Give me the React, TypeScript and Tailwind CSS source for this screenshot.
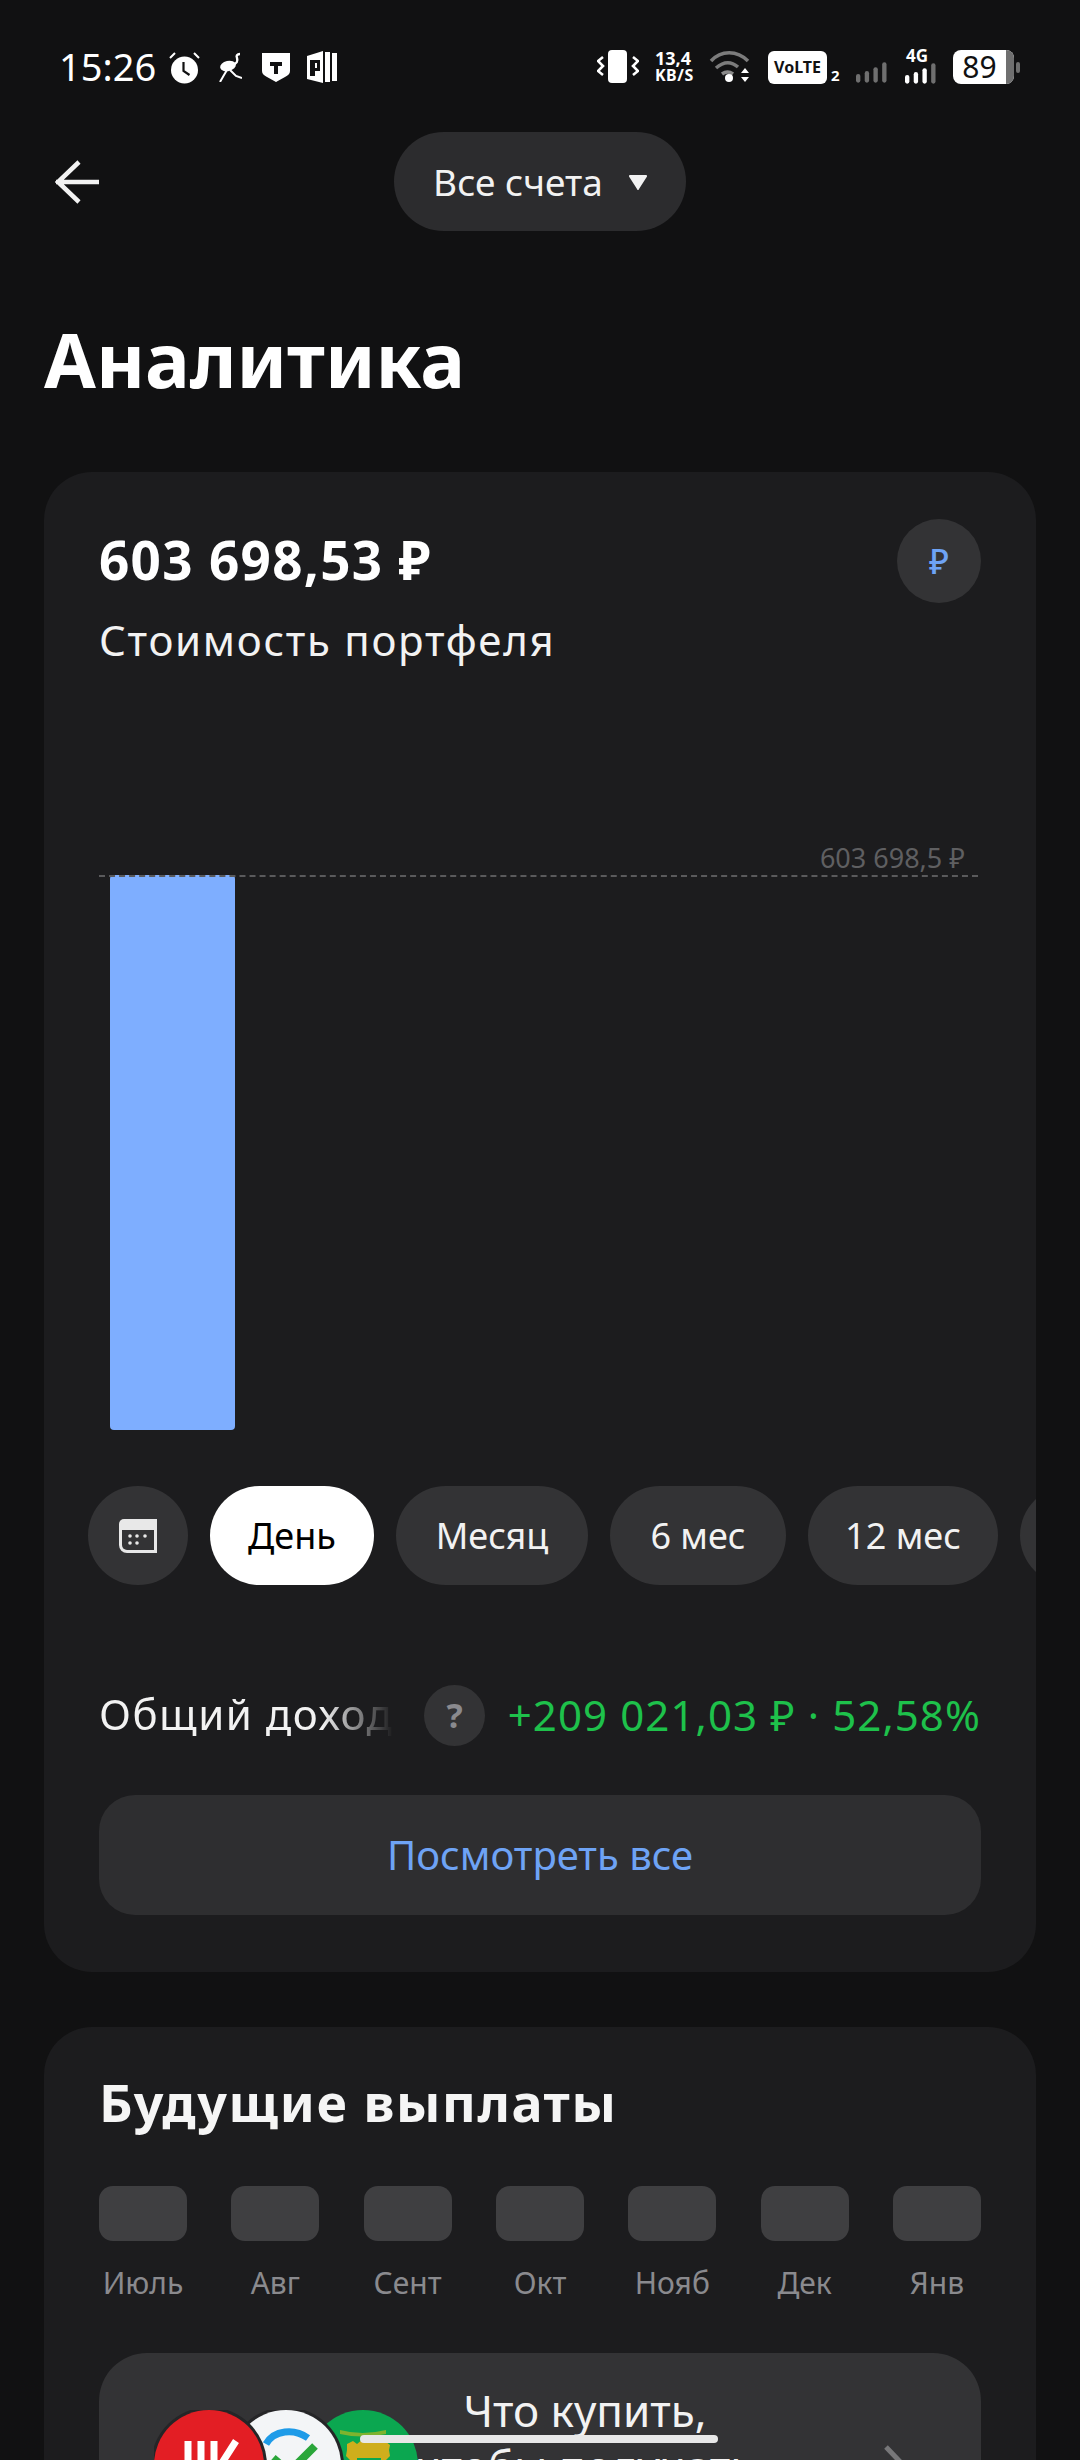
import React from 'react';

const months = ['Июль', 'Авг', 'Сент', 'Окт', 'Нояб', 'Дек', 'Янв'];

// Status bar icons
const AlarmIcon = () => (
  <svg width="31" height="33" viewBox="0 0 31 33" className="ml-[15px]">
    <circle cx="15.5" cy="19" r="13.5" fill="#fff" />
    <path d="M14.5 11v9l6 4" fill="none" stroke="#111112" strokeWidth="2.2" />
    <path d="M1 7l5-5M30 7l-5-5" stroke="#fff" strokeWidth="2" />
  </svg>
);

const OstrichIcon = () => (
  <svg width="23" height="30" viewBox="0 0 23 30" className="ml-[19px]" fill="none" stroke="#fff">
    <ellipse cx="9" cy="14" rx="8" ry="5" fill="#fff" stroke="none" transform="rotate(-12 9 14)" />
    <path d="M13 13c5-1 6-4 5-7-1-2 0-4 3-4" strokeWidth="2.4" />
    <path d="M8 18l-3 5-4 7" strokeWidth="2" />
    <path d="M11 18l6 6 6 2" strokeWidth="2" />
  </svg>
);

const ShieldIcon = () => (
  <svg width="28" height="30" viewBox="0 0 28 30" className="ml-[20px]">
    <path d="M0 1h28v18c0 3-2 4-5 6l-9 5-9-5c-3-2-5-3-5-6z" fill="#fff" />
    <path d="M8 10h12v4h-4v8h-4v-8H8z" fill="#111112" />
  </svg>
);

const ParkingIcon = () => (
  <svg width="31" height="32" viewBox="0 0 31 32" className="ml-[17px]">
    <path d="M0 5L16 0v32L0 28z" fill="#fff" />
    <rect x="18" y="1" width="5" height="30" fill="#fff" />
    <rect x="25" y="2" width="5" height="28" fill="#fff" />
    <path d="M3 9h10v11H8v5H3z M8 12v5h2v-5z" fill="#111112" fillRule="evenodd" />
  </svg>
);

const VibrateIcon = () => (
  <svg width="42" height="34" viewBox="0 0 42 34">
    <rect x="11" y="0" width="19" height="33" rx="4" fill="#fff" />
    <path d="M6 7L1 11l5 5-5 5 5 4M36 7l5 4-5 5 5 5-5 4" fill="none" stroke="#fff" strokeWidth="2.6" />
  </svg>
);

const WifiIcon = () => (
  <svg width="42" height="34" viewBox="0 0 42 34" className="ml-[14px]">
    <path d="M2 11C12 0 28 0 39 11" fill="none" stroke="#7c7c7c" strokeWidth="3.5" />
    <path d="M7 18c8-7 15-7 22-1" fill="none" stroke="#7c7c7c" strokeWidth="3.5" />
    <path d="M13 24c4-3 7-3 11 0" fill="none" stroke="#8a8a8a" strokeWidth="3.5" />
    <circle cx="20" cy="28" r="4" fill="#fff" />
    <path d="M36 18l-4 5h8zM36 32l-4-5h8z" fill="#fff" />
  </svg>
);

const SignalIcon = ({ levels }: { levels: string[] }) => (
  <svg width="31" height="22" viewBox="0 0 32 22">
    <rect x="0" y="12" width="4.5" height="9" rx="2.2" fill={levels[0]} />
    <rect x="9" y="9" width="4.5" height="12" rx="2.2" fill={levels[1]} />
    <rect x="18" y="5" width="4.5" height="16" rx="2.2" fill={levels[2]} />
    <rect x="27" y="0" width="4.5" height="21" rx="2.2" fill={levels[3]} />
  </svg>
);

const StatusBar = () => (
  <div className="flex h-[132px] items-start justify-between pl-[59px] pr-[60px] pt-[50px]">
    <div className="flex h-[34px] items-center">
      <span className="-mt-[2px] w-[95px] text-[38px] leading-none text-white">15:26</span>
      <AlarmIcon />
      <OstrichIcon />
      <ShieldIcon />
      <ParkingIcon />
    </div>
    <div className="flex h-[34px] items-center">
      <VibrateIcon />
      <div className="ml-[16px] flex w-[40px] flex-col items-start font-bold text-white">
        <span className="text-[18px] leading-[17px]">13,4</span>
        <span className="whitespace-nowrap text-[16px] leading-[17px] tracking-[0.5px]">KB/S</span>
      </div>
      <WifiIcon />
      <div className="ml-[17px] flex h-[33px] w-[59px] items-center justify-center rounded-[6px] bg-white text-[16px] font-bold text-[#111112]">
        VoLTE
      </div>
      <span className="ml-[4px] w-[9px] self-end text-[15px] font-bold leading-[17px] text-white">2</span>
      <div className="ml-[16px] mt-[11px]">
        <SignalIcon levels={['#6f6f6f', '#6f6f6f', '#6f6f6f', '#6f6f6f']} />
      </div>
      <div className="ml-[16px] flex w-[34px] flex-col items-center">
        <span className="-ml-[6px] text-[17px] font-bold leading-[14px] text-white">4G</span>
        <SignalIcon levels={['#fff', '#fff', '#fff', '#6f6f6f']} />
      </div>
      <div className="ml-[16px] flex items-center">
        <div className="flex h-[34px] w-[61px] items-center rounded-[8px] bg-white">
          <span className="flex-1 text-center text-[30px] leading-none text-[#111112]">89</span>
          <span className="h-[34px] w-[8px] rounded-r-[8px] bg-[#6f6f6f]" />
        </div>
        <span className="ml-[2px] h-[11px] w-[4px] rounded-[2px] bg-[#6f6f6f]" />
      </div>
    </div>
  </div>
);

const Header = () => (
  <div className="relative flex h-[99px] items-center justify-center">
    <svg width="44" height="44" viewBox="0 0 44 44" className="absolute left-[55px] top-[28px]" fill="none" stroke="#f2f2f2" strokeWidth="4.5">
      <path d="M1 22h43M24 2L3 22l21 20" />
    </svg>
    <div className="flex h-[99px] w-[292px] items-center justify-center gap-[26px] rounded-full bg-[#2c2c2e] text-[37px] text-[#f2f2f2]">
      <span>Все счета</span>
      <svg width="18" height="16" viewBox="0 0 18 16">
        <path d="M1 1h16a1 1 0 0 1 1 1.5L10 15a1 1 0 0 1-2 0L0 2.5A1 1 0 0 1 1 1z" fill="#f2f2f2" />
      </svg>
    </div>
  </div>
);

const PeriodPill = ({ label, active, width }: { label: string; active?: boolean; width: string }) => (
  <div
    className={`flex h-[99px] shrink-0 items-center justify-center rounded-full text-[36px] ${width} ${
      active ? 'bg-white text-black' : 'bg-[#333335] text-[#f2f2f2]'
    }`}
  >
    {label}
  </div>
);

const PortfolioCard = () => (
  <div className="mx-[44px] h-[1500px] overflow-hidden rounded-[48px] bg-[#1c1c1e]">
    <div className="flex items-start justify-between pl-[55px] pr-[55px] pt-[47px]">
      <div>
        <div className="text-[53px] font-bold leading-[82px] tracking-[1.3px] text-white">603 698,53 ₽</div>
        <div className="text-[42px] leading-[78px] tracking-[1.7px] text-[#f2f2f2]">Стоимость портфеля</div>
      </div>
      <div className="flex h-[84px] w-[84px] items-center justify-center rounded-full bg-[#333335] text-[34px] font-medium text-[#6ea3f5]">
        ₽
      </div>
    </div>

    {/* Chart */}
    <div className="relative mt-[196px] h-[562px] pl-[66px]">
      <div className="absolute left-[55px] top-[0px] w-[879px] border-t-2 border-dashed border-[#5a5a5c]" />
      <div className="absolute right-[71px] top-[-35px] text-[27px] leading-[36px] text-[#5f5f61]">603 698,5 ₽</div>
      <div className="mt-[9px] h-[555px] w-[125px] rounded-[4px] bg-[#7eaeff]" />
    </div>

    {/* Period selector */}
    <div className="mt-[49px] flex gap-[22px] pl-[44px]">
      <div className="flex h-[99px] w-[100px] shrink-0 items-center justify-center rounded-full bg-[#333335]">
        <svg width="38" height="36" viewBox="0 0 38 36">
          <path d="M0 6a5 5 0 0 1 5-5h33v34H8a8 8 0 0 1-8-8z" fill="#e8e8e8" />
          <path d="M3 12h32v20H8a5 5 0 0 1-5-5z" fill="#333335" />
          <g fill="#e8e8e8">
            <circle cx="11" cy="18" r="1.8" />
            <circle cx="18" cy="18" r="1.8" />
            <circle cx="26" cy="18" r="1.8" />
            <circle cx="11" cy="25" r="1.8" />
            <circle cx="18" cy="25" r="1.8" />
          </g>
        </svg>
      </div>
      <PeriodPill label="День" active width="w-[164px]" />
      <PeriodPill label="Месяц" width="w-[192px]" />
      <PeriodPill label="6 мес" width="w-[176px]" />
      <PeriodPill label="12 мес" width="w-[190px]" />
      <PeriodPill label="" width="w-[100px]" />
    </div>

    {/* Total income */}
    <div className="mt-[100px] flex h-[61px] items-center pl-[55px] pr-[55px]">
      <div className="w-[294px] overflow-hidden whitespace-nowrap pb-[4px] text-[42px] tracking-[1.5px] text-[#f2f2f2] [mask-image:linear-gradient(to_right,#000_76%,transparent_100%)]">
        Общий доход
      </div>
      <div className="ml-[31px] flex h-[61px] w-[61px] shrink-0 items-center justify-center rounded-full bg-[#333335] text-[34px] font-bold text-[#8a8a8e]">
        ?
      </div>
      <div className="ml-auto whitespace-nowrap pb-[2px] text-[42px] tracking-[1.1px] text-[#1ec14b]">+209 021,03 ₽ · 52,58%</div>
    </div>

    <div className="mx-[55px] mt-[49px] flex h-[120px] items-center justify-center rounded-[36px] bg-[#2e2e30] text-[40px] text-[#6ea3f5]">
      Посмотреть все
    </div>
  </div>
);

const CompanyLogos = () => (
  <svg width="264" height="110" viewBox="0 0 264 110" className="shrink-0">
    <circle cx="209" cy="55" r="55" fill="#0ba750" />
    <path d="M186 20q22 6 46 0v4q-24 5-46 0z" fill="#7fb32e" />
    <path d="M193 34l6-3 4 3 6-5 6 3 6-3 5 4 5-2 5 4-1 5 1 6-4 4-1 6h-34l-1-6-4-4 1-6z" fill="#cfae1c" />
    <rect x="203" y="48" width="24" height="26" fill="#0ba750" />
    <circle cx="132" cy="55" r="58" fill="#252527" />
    <circle cx="132" cy="55" r="55" fill="#f3f5f7" />
    <path d="M112 34c8-14 28-16 42-6" fill="none" stroke="#1e9be8" strokeWidth="7" />
    <path d="M119 48l16 14 26-26" fill="none" stroke="#2aa63a" strokeWidth="8" />
    <circle cx="55" cy="55" r="58" fill="#252527" />
    <circle cx="55" cy="55" r="55" fill="#e31e24" />
    <path d="M34 31v30M47 31v30M60 31v30M82 31L66 56" fill="none" stroke="#fff" strokeWidth="7" />
  </svg>
);

const PayoutsCard = () => (
  <div className="mx-[44px] mt-[55px] h-[600px] rounded-[48px] bg-[#1c1c1e] pl-[55px] pr-[55px] pt-[41px]">
    <div className="text-[52px] font-bold leading-[68px] tracking-[1.6px] text-[#f5f5f5]">Будущие выплаты</div>
    <div className="mt-[50px] flex justify-between">
      {months.map((month) => (
        <div key={month} className="flex w-[88px] flex-col items-center">
          <div className="h-[55px] w-[88px] rounded-[14px] bg-[#3f3f41]" />
          <div className="mt-[22px] text-[30px] leading-[40px] text-[#8a8a8e]">{month}</div>
        </div>
      ))}
    </div>
    <div className="mt-[50px] flex h-[220px] items-start rounded-[48px] bg-[#333335] pl-[55px] pr-[70px] pt-[57px]">
      <CompanyLogos />
      <div className="-ml-[13px] -mt-[28px] w-[360px] shrink-0 text-center text-[44px] leading-[56px] text-[#f2f2f2]">
        Что купить,
        <br />
        чтобы получать
      </div>
      <svg width="28" height="50" viewBox="0 0 28 50" className="ml-auto mt-[35px] shrink-0" fill="none" stroke="#777779" strokeWidth="5">
        <path d="M3 2l22 23L3 48" />
      </svg>
    </div>
  </div>
);

export default function App() {
  return (
    <div className="relative h-[2460px] w-[1080px] overflow-hidden bg-[#111112] font-['Noto_Sans',sans-serif]">
      <StatusBar />
      <Header />
      <h1 className="ml-[44px] mt-[78px] h-[163px] text-[75px] font-bold leading-[100px] text-white">Аналитика</h1>
      <PortfolioCard />
      <PayoutsCard />
      {/* Home indicator */}
      <div className="absolute left-[360px] top-[2435px] h-[8px] w-[358px] rounded-full bg-[#e8e8e8]" />
    </div>
  );
}
